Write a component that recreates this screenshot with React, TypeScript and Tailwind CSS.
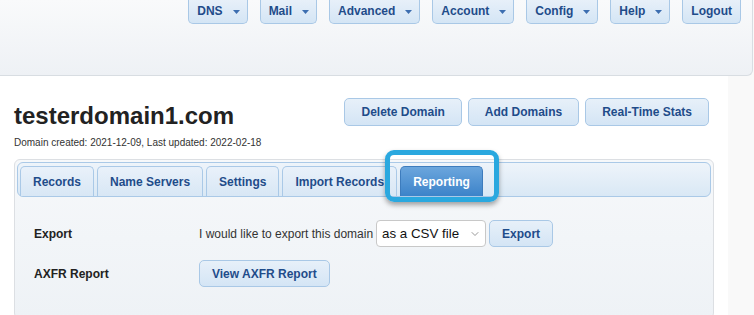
import React from 'react';
import { ChevronDown } from 'lucide-react';

const NAV = [
  { label: 'DNS', caret: true },
  { label: 'Mail', caret: true },
  { label: 'Advanced', caret: true },
  { label: 'Account', caret: true },
  { label: 'Config', caret: true },
  { label: 'Help', caret: true },
  { label: 'Logout', caret: false },
];

const TABS = ['Records', 'Name Servers', 'Settings', 'Import Records', 'Reporting'];

const btn =
  'border border-[#a9c8e6] bg-gradient-to-b from-[#e7f0f9] to-[#d4e5f5] text-[#1f4c8a] font-bold text-[12px]';

function Caret() {
  return (
    <svg width="7" height="4" viewBox="0 0 7 4" className="mt-[2px]">
      <path d="M0 0h7L3.5 4z" fill="#3d6eb0" />
    </svg>
  );
}

export default function App() {
  return (
    <div className="min-h-screen bg-[#f9f9f9] font-['Liberation_Sans',Arial,sans-serif]">
      {/* Top bar */}
      <header className="w-[753px] h-[76px] border-r border-b border-[#d8dde2] rounded-br-[6px] bg-gradient-to-b from-[#f9fafb] to-[#eef1f5] flex justify-end gap-3 pr-[11px]">
        {NAV.map((n) => (
          <div
            key={n.label}
            className={`${btn} h-[24px] border-t-0 rounded-b-[5px] flex items-center gap-[10px] pb-[1px] ${n.caret ? 'pl-[8px] pr-[7px]' : 'px-[8px]'}`}
          >
            <span>{n.label}</span>
            {n.caret && <Caret />}
          </div>
        ))}
      </header>

      <main className="w-[728px] h-[239px] bg-white pl-[14px] pt-[22px]">
        {/* Title row */}
        <div className="flex justify-between items-start w-[695px]">
          <div>
            <h1 className="mt-[4px] text-[24px] leading-[28px] font-bold text-[#222]">testerdomain1.com</h1>
            <p className="mt-[6px] text-[10px] leading-[13px] text-[#333]">
              Domain created: 2021-12-09, Last updated: 2022-02-18
            </p>
          </div>
          <div className="flex gap-[6px]">
            {['Delete Domain', 'Add Domains', 'Real-Time Stats'].map((b) => (
              <div key={b} className={`${btn} h-[28px] px-[16px] rounded-[5px] flex items-center`}>
                {b}
              </div>
            ))}
          </div>
        </div>

        {/* Tab panel */}
        <div className="mt-[10px] w-[700px] h-[160px] border border-[#dcdfe3] rounded-[6px] p-[2px] bg-gradient-to-b from-[#f6f8fa] to-[#eef2f6]">
          <div className="h-[35px] border border-[#aac9e7] rounded-[6px] bg-gradient-to-b from-[#eef4fa] to-[#d9e8f5] flex items-end gap-[3px] px-[2px]">
            {TABS.map((t) =>
              t === 'Reporting' ? (
                <div key={t} className="relative">
                  <div className="h-[30px] px-[12px] flex items-center rounded-t-[5px] border border-b-0 border-[#3d7cbd] bg-gradient-to-b from-[#6ba6dd] to-[#3c83c9] text-white font-bold text-[12px]">
                    {t}
                  </div>
                  <div className="absolute -left-[15px] -right-[16px] -top-[16px] -bottom-[6px] border-[5px] border-[#2aa8df] rounded-[9px] shadow-[0_3px_5px_rgba(0,0,0,0.35)]" />
                </div>
              ) : (
                <div
                  key={t}
                  className="h-[30px] px-[12px] flex items-center rounded-t-[5px] border border-b-0 border-[#aac9e7] bg-gradient-to-b from-[#e9f1fa] to-[#d8e7f5] text-[#1f4c8a] font-bold text-[12px]"
                >
                  {t}
                </div>
              )
            )}
          </div>

          <div className="pt-[23px] pl-[17px] flex flex-col gap-[13px] text-[12px]">
            <div className="flex items-center h-[27px]">
              <div className="w-[165px] font-bold text-[#222]">Export</div>
              <div className="flex items-center gap-[3px] text-[#333]">
                <span>I would like to export this domain</span>
                <div className="w-[110px] h-[27px] bg-white border border-[#c8c8c8] rounded-[4px] flex items-center justify-between pl-[5px] pr-[4px] text-[13.33px] text-[#111]">
                  <span>as a CSV file</span>
                  <ChevronDown size={12} strokeWidth={1.5} className="text-[#777]" />
                </div>
                <div className={`${btn} h-[27px] px-[12px] rounded-[5px] flex items-center`}>Export</div>
              </div>
            </div>
            <div className="flex items-center h-[27px]">
              <div className="w-[165px] font-bold text-[#222]">AXFR Report</div>
              <div className={`${btn} h-[27px] px-[12px] rounded-[5px] flex items-center`}>View AXFR Report</div>
            </div>
          </div>
        </div>
      </main>
    </div>
  );
}
